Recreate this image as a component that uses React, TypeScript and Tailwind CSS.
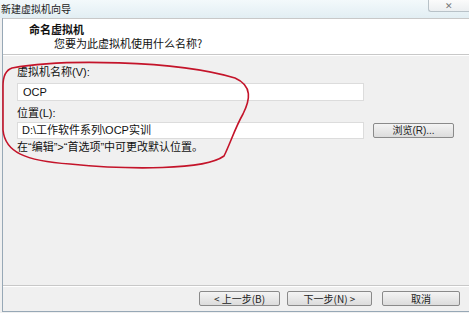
import React from "react";

const cjk = { fontFamily: '"Noto Sans CJK SC", "Noto Sans", sans-serif' };
const mixed = { fontFamily: '"Liberation Sans", "Noto Sans CJK SC", sans-serif' };

function Btn({ children, className = "" }: { children: React.ReactNode; className?: string }) {
  return (
    <div
      className={`flex items-center justify-center h-[15px] border border-[#8a8a8a] rounded-[2px] bg-gradient-to-b from-[#f4f4f4] to-[#dcdcdc] text-[10px] text-[#222] leading-none ${className}`}
    >
      {children}
    </div>
  );
}

export default function App() {
  return (
    <div className="relative w-[469px] h-[313px] overflow-hidden bg-[#f0f0f0] flex flex-col" style={cjk}>
      {/* title bar */}
      <div className="h-[18px] flex items-center bg-gradient-to-b from-[#f3f9fb] to-[#e2eef3] relative">
        <span className="text-[10px] leading-none text-[#1a1a1a] pl-[1px]">新建虚拟机向导</span>
        <div className="absolute right-0 top-0 w-[41px] h-[12px] border-l border-b border-[#b8c2c8] rounded-bl-[3px] bg-gradient-to-b from-[#fbfbfb] to-[#eceff1] flex items-center justify-center text-[9px] leading-none text-[#777]">
          ✕
        </div>
      </div>
      {/* frame */}
      <div className="flex-1 flex flex-col ml-[2px] border-l border-b border-[#97a8b6] mb-[1px]">
        {/* header */}
        <div className="h-[37px] bg-white border-t border-b border-[#c8c8c8] flex flex-col">
          <div className="pl-[26px] pt-[4px] text-[11px] font-bold leading-[13px] text-[#111]">命名虚拟机</div>
          <div className="pl-[51px] pt-[1px] text-[11px] leading-[13px] text-[#111]">您要为此虚拟机使用什么名称?</div>
        </div>
        <div className="h-[1px] bg-white" />
        {/* body */}
        <div className="flex-1 flex flex-col pl-[14px] pt-[10px] text-[11px] text-[#111]" style={mixed}>
          <div className="leading-[13px]">虚拟机名称(V):</div>
          <div className="mt-[4px] w-[347px] h-[18px] bg-white border border-[#dcdcdc] flex items-center pl-[5px] leading-none">OCP</div>
          <div className="mt-[6px] leading-[13px]">位置(L):</div>
          <div className="mt-[2px] flex items-center">
            <div className="w-[347px] h-[17px] bg-white border border-[#dcdcdc] flex items-center pl-[4px] leading-none">D:\工作软件系列\OCP实训</div>
            <Btn className="ml-[9px] w-[81px]">浏览(R)...</Btn>
          </div>
          <div className="mt-[2px] leading-[13px]">在“编辑”&gt;“首选项”中可更改默认位置。</div>
        </div>
        {/* footer */}
        <div className="h-[26px] border-t border-[#c8c8c8] shadow-[inset_0_1px_0_#ffffff] flex items-start justify-end pr-[9px] pt-[5px] gap-[7px]">
          <Btn className="w-[81px]">&lt; 上一步(B)</Btn>
          <Btn className="w-[85px]">下一步(N) &gt;</Btn>
          <Btn className="ml-[3px] w-[78px]">取消</Btn>
        </div>
      </div>
      {/* red hand-drawn ellipse */}
      <svg className="absolute left-0 top-0 pointer-events-none" width="469" height="313" viewBox="0 0 469 313">
        <path
          d="M 12 68 C 60 59, 175 60, 235 78 C 253 86, 250 100, 243 114 C 235 128, 230 144, 224 156 C 205 170, 130 170, 70 164 C 25 161, 5 152, 3 130 L 3 86 C 3 76, 6 70, 12 68 Z"
          fill="none"
          stroke="#c4142a"
          strokeWidth="1.6"
        />
      </svg>
    </div>
  );
}
